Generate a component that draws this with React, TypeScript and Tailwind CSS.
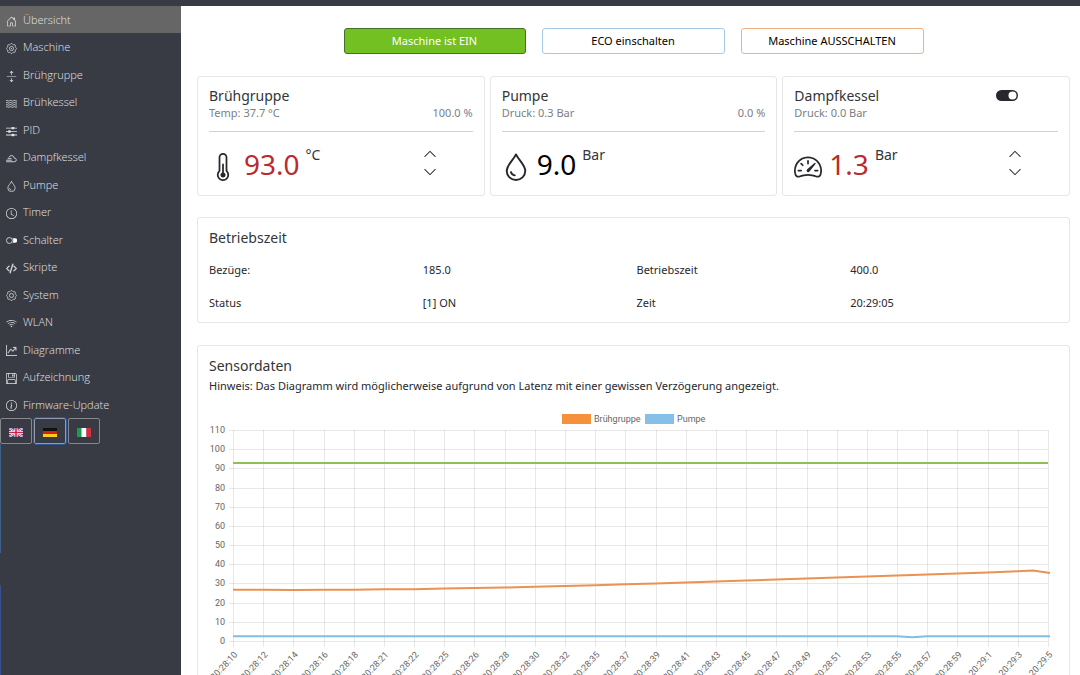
import type { ReactNode } from "react";
import {
  BsArrowsExpand, BsChevronDown, BsChevronUp, BsClock, BsCodeSlash, BsFloppy,
  BsGraphUpArrow, BsHouseDoor, BsInfoCircle, BsSpeedometer2, BsThermometerHalf, BsWifi,
} from "react-icons/bs";

const gearOutline =
  "M" +
  Array.from({ length: 64 }, (_, i) => {
    const a = (i / 64) * Math.PI * 2;
    const r = 6.7 + 0.7 * Math.cos(8 * a);
    return `${(8 + r * Math.cos(a)).toFixed(2)} ${(8 + r * Math.sin(a)).toFixed(2)}`;
  }).join("L") +
  "Z";

const Gear = ({ dot = false }: { dot?: boolean }) => (
  <svg viewBox="0 0 16 16" width="1em" height="1em" fill="none" stroke="currentColor" strokeWidth="1.100">
    <path d={gearOutline} strokeLinejoin="round" />
    <circle cx="8" cy="8" r="3" />
    {dot && <circle cx="8" cy="8" r=".9" fill="currentColor" stroke="none" />}
  </svg>
);

const Waves = () => (
  <svg viewBox="0 0 16 16" width="1em" height="1em" fill="none" stroke="currentColor" strokeWidth="1.200">
    {[4, 7, 10, 13].map((y) => (
      <path key={y} d={`M0 ${y}q1.300-1 2.600 0t2.700 0 2.700 0 2.700 0 2.700 0 2.600 0`} />
    ))}
  </svg>
);

const Sliders = () => (
  <svg viewBox="0 0 16 16" width="1em" height="1em" fill="currentColor">
    <path d="M0 2.500h16v1.200H0zM0 7.500h16v1.200H0zM0 12.500h16v1.200H0z" />
    <rect x="8" y="1.300" width="4" height="3.600" rx="1" />
    <rect x="3" y="6.300" width="4" height="3.600" rx="1" />
    <rect x="8" y="11.300" width="4" height="3.600" rx="1" />
  </svg>
);

const SteamCloud = () => (
  <svg viewBox="0 0 16 16" width="1em" height="1em" fill="none" stroke="currentColor" strokeWidth="1.200" strokeLinecap="round">
    <path d="M4.300 6.200a4 4 0 0 1 7.700 1.300 2.600 2.600 0 0 1 .7 5.200H9" />
    <path d="M3 8.200h4.500M.8 10.500h7M.8 12.700h7.500" />
  </svg>
);

const Switch = () => (
  <svg viewBox="0 0 16 16" width="1em" height="1em">
    <circle cx="5" cy="8" r="4.300" fill="none" stroke="currentColor" strokeWidth="1.200" />
    <path d="M9.500 4.800h3.500a3 3 0 0 1 0 6.400H9.500a5.500 5.500 0 0 0 0-6.400z" fill="#fff" />
  </svg>
);

const Drop = () => (
  <svg viewBox="0 0 16 16" width="1em" height="1em" fill="none" stroke="currentColor" strokeWidth="1.100" strokeLinecap="round">
    <path d="M8 .8C6.600 4 2.700 6.700 2.700 10.300a5.300 5.100 0 0 0 10.600 0C13.300 6.700 9.400 4 8 .8z" strokeLinejoin="round" />
    <path d="M5.100 10.900c.3 1.100 1.100 1.700 2.200 1.900" />
  </svg>
);

const nav: { label: string; icon: ReactNode }[] = [
  { label: "Übersicht", icon: <BsHouseDoor /> },
  { label: "Maschine", icon: <Gear dot /> },
  { label: "Brühgruppe", icon: <BsArrowsExpand /> },
  { label: "Brühkessel", icon: <Waves /> },
  { label: "PID", icon: <Sliders /> },
  { label: "Dampfkessel", icon: <SteamCloud /> },
  { label: "Pumpe", icon: <Drop /> },
  { label: "Timer", icon: <BsClock /> },
  { label: "Schalter", icon: <Switch /> },
  { label: "Skripte", icon: <BsCodeSlash strokeWidth="0.8" /> },
  { label: "System", icon: <Gear /> },
  { label: "WLAN", icon: <BsWifi /> },
  { label: "Diagramme", icon: <BsGraphUpArrow strokeWidth="0.3" /> },
  { label: "Aufzeichnung", icon: <BsFloppy /> },
  { label: "Firmware-Update", icon: <BsInfoCircle /> },
];

function Flag({ code }: { code: string }) {
  return (
    <svg viewBox="0 0 14 9" className="h-[9px] w-[14px]">
      {code === "en" && (
        <>
          <rect width="14" height="9" fill="#3c4a8c" />
          <path d="M0 0 14 9M14 0 0 9" stroke="#fff" strokeWidth="2" />
          <path d="M0 0 14 9M14 0 0 9" stroke="#cf3350" strokeWidth=".8" />
          <path d="M7 0v9M0 4.500h14" stroke="#fff" strokeWidth="3" />
          <path d="M7 0v9M0 4.500h14" stroke="#cf2344" strokeWidth="1.600" />
        </>
      )}
      {code === "de" && (
        <>
          <rect width="14" height="3" fill="#111" />
          <rect y="3" width="14" height="3" fill="#d3200f" />
          <rect y="6" width="14" height="3" fill="#ffc91f" />
        </>
      )}
      {code === "it" && (
        <>
          <rect width="5" height="9" fill="#1d9a50" />
          <rect x="4.500" width="5" height="9" fill="#fff" />
          <rect x="9.500" width="4.500" height="9" fill="#d52f41" />
        </>
      )}
    </svg>
  );
}

function Sidebar() {
  return (
    <aside className="flex w-[181px] shrink-0 flex-col bg-[#383b44] text-[#e2e3e5]">
      <nav className="grid h-[412px] auto-rows-fr">
        {nav.map((n, i) => (
          <a
            key={n.label}
            href="#"
            className={`flex items-center gap-[6px] pt-px pl-[6px] font-['Open_Sans',sans-serif] text-[11px] font-light ${i === 0 ? "bg-[#666666]" : ""}`}
          >
            <span className="pt-[2px]">{n.icon}</span>
            {n.label}
          </a>
        ))}
      </nav>
      <div className="flex gap-[2px]">
        {[["en", "English"], ["de", "Deutsch"], ["it", "Italiano"]].map(([code, label]) => (
          <button
            key={code}
            aria-label={label}
            className={`flex h-[26px] w-8 items-center justify-center rounded-xs border pt-[2px] ${code === "de" ? "border-[#8d9bb8] outline outline-[#2f5597]" : "border-[#85878c]"}`}
          >
            <Flag code={code} />
          </button>
        ))}
      </div>
      <div className="flex grow flex-col gap-8">
        <div className="h-[109px] w-px bg-[#3d6088]" />
        <div className="w-px grow bg-[#35508a]" />
      </div>
    </aside>
  );
}

interface GaugeProps {
  title: string;
  sub: string;
  percent?: string;
  icon: ReactNode;
  value: string;
  unit: string;
  red?: boolean;
  toggle?: boolean;
}

function GaugeCard({ title, sub, percent, icon, value, unit, red, toggle }: GaugeProps) {
  return (
    <section className="h-[120px] rounded-[3px] border border-[#e6e6e6] px-[11px] pt-[10px]">
      <div className="flex items-center justify-between">
        <h2 className="text-[14px] leading-[17px] text-[#32353a]">{title}</h2>
        {toggle && (
          <button aria-label="Dampfkessel ein/aus" className="mr-10 text-[#26282d]">
            <svg viewBox="0 0 22 11" className="h-[11px] w-[22px]">
              <rect width="22" height="11" rx="5.500" fill="currentColor" />
              <circle cx="16.500" cy="5.500" r="4" fill="#fff" />
            </svg>
          </button>
        )}
      </div>
      <div className="flex justify-between text-[11px] leading-[17px] text-[#7b7e84]">
        <span>{sub}</span>
        <span>{percent}</span>
      </div>
      <div className="mt-[10px] flex items-start justify-between border-t border-[#d2d2d2] pt-[15px]">
        <div className="flex items-start">
          <span className="mt-[6px] text-[28px] text-[#26282d]">{icon}</span>
          <span className={`ml-[7px] text-[28px] leading-[34px] ${red ? "text-[#b92b2f]" : "text-black"}`}>{value}</span>
          <span className="ml-[6px] text-[14px] leading-[16px] text-[#32353a]">{unit}</span>
        </div>
        {red && (
          <div className="mr-9 flex flex-col gap-1 text-[14px] text-[#26282d]">
            <button aria-label="Erhöhen"><BsChevronUp /></button>
            <button aria-label="Verringern"><BsChevronDown /></button>
          </div>
        )}
      </div>
    </section>
  );
}

const times = [
  "28:10", "28:12", "28:14", "28:16", "28:18", "28:21", "28:22", "28:25", "28:26", "28:28", "28:30", "28:32", "28:35", "28:37",
  "28:39", "28:41", "28:43", "28:45", "28:47", "28:49", "28:51", "28:53", "28:55", "28:57", "28:59", "29:1", "29:3", "29:5",
];
const brew = [
  27, 27, 26.9, 27, 27, 27.2, 27.3, 27.6, 27.9, 28.1, 28.5, 28.9, 29.3, 29.8, 30.2, 30.8,
  31.3, 31.8, 32.3, 32.9, 33.4, 33.9, 34.4, 34.9, 35.4, 36, 36.6,
];
const X0 = 24;
const X1 = 839;
const Y0 = 230;
const STEP = (X1 - X0) / 27;
const xAt = (i: number) => X0 + STEP * i;
const yAt = (v: number) => Y0 - (v * 211) / 110;

function SensorChart() {
  const brewPoints = brew.map((v, i) => `${xAt(i)},${yAt(v)}`).join(" ") + ` ${xAt(26.5)},${yAt(37)} ${X1 + 2},${yAt(35.7)}`;
  return (
    <svg viewBox="0 0 849 280" className="block h-auto w-full font-['Roboto',sans-serif] text-[9px]" fill="#666" role="img" aria-label="Sensordaten">
      <rect x="353" y="3" width="29" height="10" fill="#f5903d" />
      <text x="385" y="11">Brühgruppe</text>
      <rect x="436" y="3" width="29" height="10" fill="#86c0e8" />
      <text x="468" y="11">Pumpe</text>
      <g stroke="#000" strokeOpacity=".09">
        {times.map((t, i) => (
          <path key={t} d={`M${Math.round(xAt(i)) + 0.5} 19V${Y0 + 6}`} />
        ))}
        {Array.from({ length: 12 }, (_, i) => (
          <path key={i} d={`M${X0 - 4} ${Math.round(yAt(i * 10)) + 0.5}H${X1}`} />
        ))}
      </g>
      {Array.from({ length: 12 }, (_, i) => (
        <text key={i} x="16" y={Math.round(yAt(i * 10)) + 3} textAnchor="end">{i * 10}</text>
      ))}
      {times.map((t, i) => (
        <text key={t} textAnchor="end" transform={`translate(${xAt(i) + 5} ${Y0 + 14}) rotate(-47)`}>{`20:${t}`}</text>
      ))}
      <g fill="none" strokeWidth="2" transform="translate(0 .5)">
        <path d={`M${X0} ${yAt(93)}H${X1}`} stroke="#8fbf55" />
        <polyline points={brewPoints} stroke="#ea9254" />
        <path d={`M${X0} ${yAt(2.8)}H${xAt(22)}L${xAt(22.5)} ${yAt(2.2)}L${xAt(23)} ${yAt(2.8)}H${X1 + 2}`} stroke="#7fbfe3" />
      </g>
    </svg>
  );
}

export default function App() {
  return (
    <div className="flex min-h-screen flex-col bg-white font-['Noto_Sans',sans-serif] text-[#26282d]">
      <header className="h-[6px] bg-[#383b44]" />
      <div className="flex grow">
        <Sidebar />
        <main className="min-w-0 grow pt-[22px] pr-[10px] pl-4">
          <div className="flex justify-center gap-4 text-[11px]">
            <button className="h-[26px] w-[182px] rounded-[3px] border border-[#44702a] bg-[#73c023] text-white">Maschine ist EIN</button>
            <button className="h-[26px] w-[183px] rounded-[3px] border border-[#a5c9e6] text-black">ECO einschalten</button>
            <button className="h-[26px] w-[183px] rounded-[3px] border border-[#edb183] text-black">Maschine AUSSCHALTEN</button>
          </div>
          <div className="mt-[22px] grid grid-cols-3 gap-[5px]">
            <GaugeCard title="Brühgruppe" sub="Temp: 37.7 °C" percent="100.0 %" icon={<BsThermometerHalf />} value="93.0" unit="°C" red />
            <GaugeCard title="Pumpe" sub="Druck: 0.3 Bar" percent="0.0 %" icon={<Drop />} value="9.0" unit="Bar" />
            <GaugeCard title="Dampfkessel" sub="Druck: 0.0 Bar" icon={<BsSpeedometer2 />} value="1.3" unit="Bar" red toggle />
          </div>
          <section className="mt-[21px] h-[106px] rounded-[3px] border border-[#e6e6e6] px-[11px] pt-[11px]">
            <h2 className="text-[14px] leading-[18px] text-[#32353a]">Betriebszeit</h2>
            <dl className="mt-[6px] grid grid-cols-4 gap-x-[6px] text-[11px] leading-[33px]">
              <dt>Bezüge:</dt>
              <dd>185.0</dd>
              <dt>Betriebszeit</dt>
              <dd>400.0</dd>
              <dt>Status</dt>
              <dd>[1] ON</dd>
              <dt>Zeit</dt>
              <dd>20:29:05</dd>
            </dl>
          </section>
          <section className="mt-[22px] rounded-[3px] border border-[#e6e6e6] px-[11px] pt-[11px]">
            <h2 className="text-[14px] leading-[18px] text-[#32353a]">Sensordaten</h2>
            <p className="text-[11px] leading-[22px]">
              Hinweis: Das Diagramm wird möglicherweise aufgrund von Latenz mit einer gewissen Verzögerung angezeigt.
            </p>
            <div className="mt-[14px]">
              <SensorChart />
            </div>
          </section>
        </main>
      </div>
    </div>
  );
}
